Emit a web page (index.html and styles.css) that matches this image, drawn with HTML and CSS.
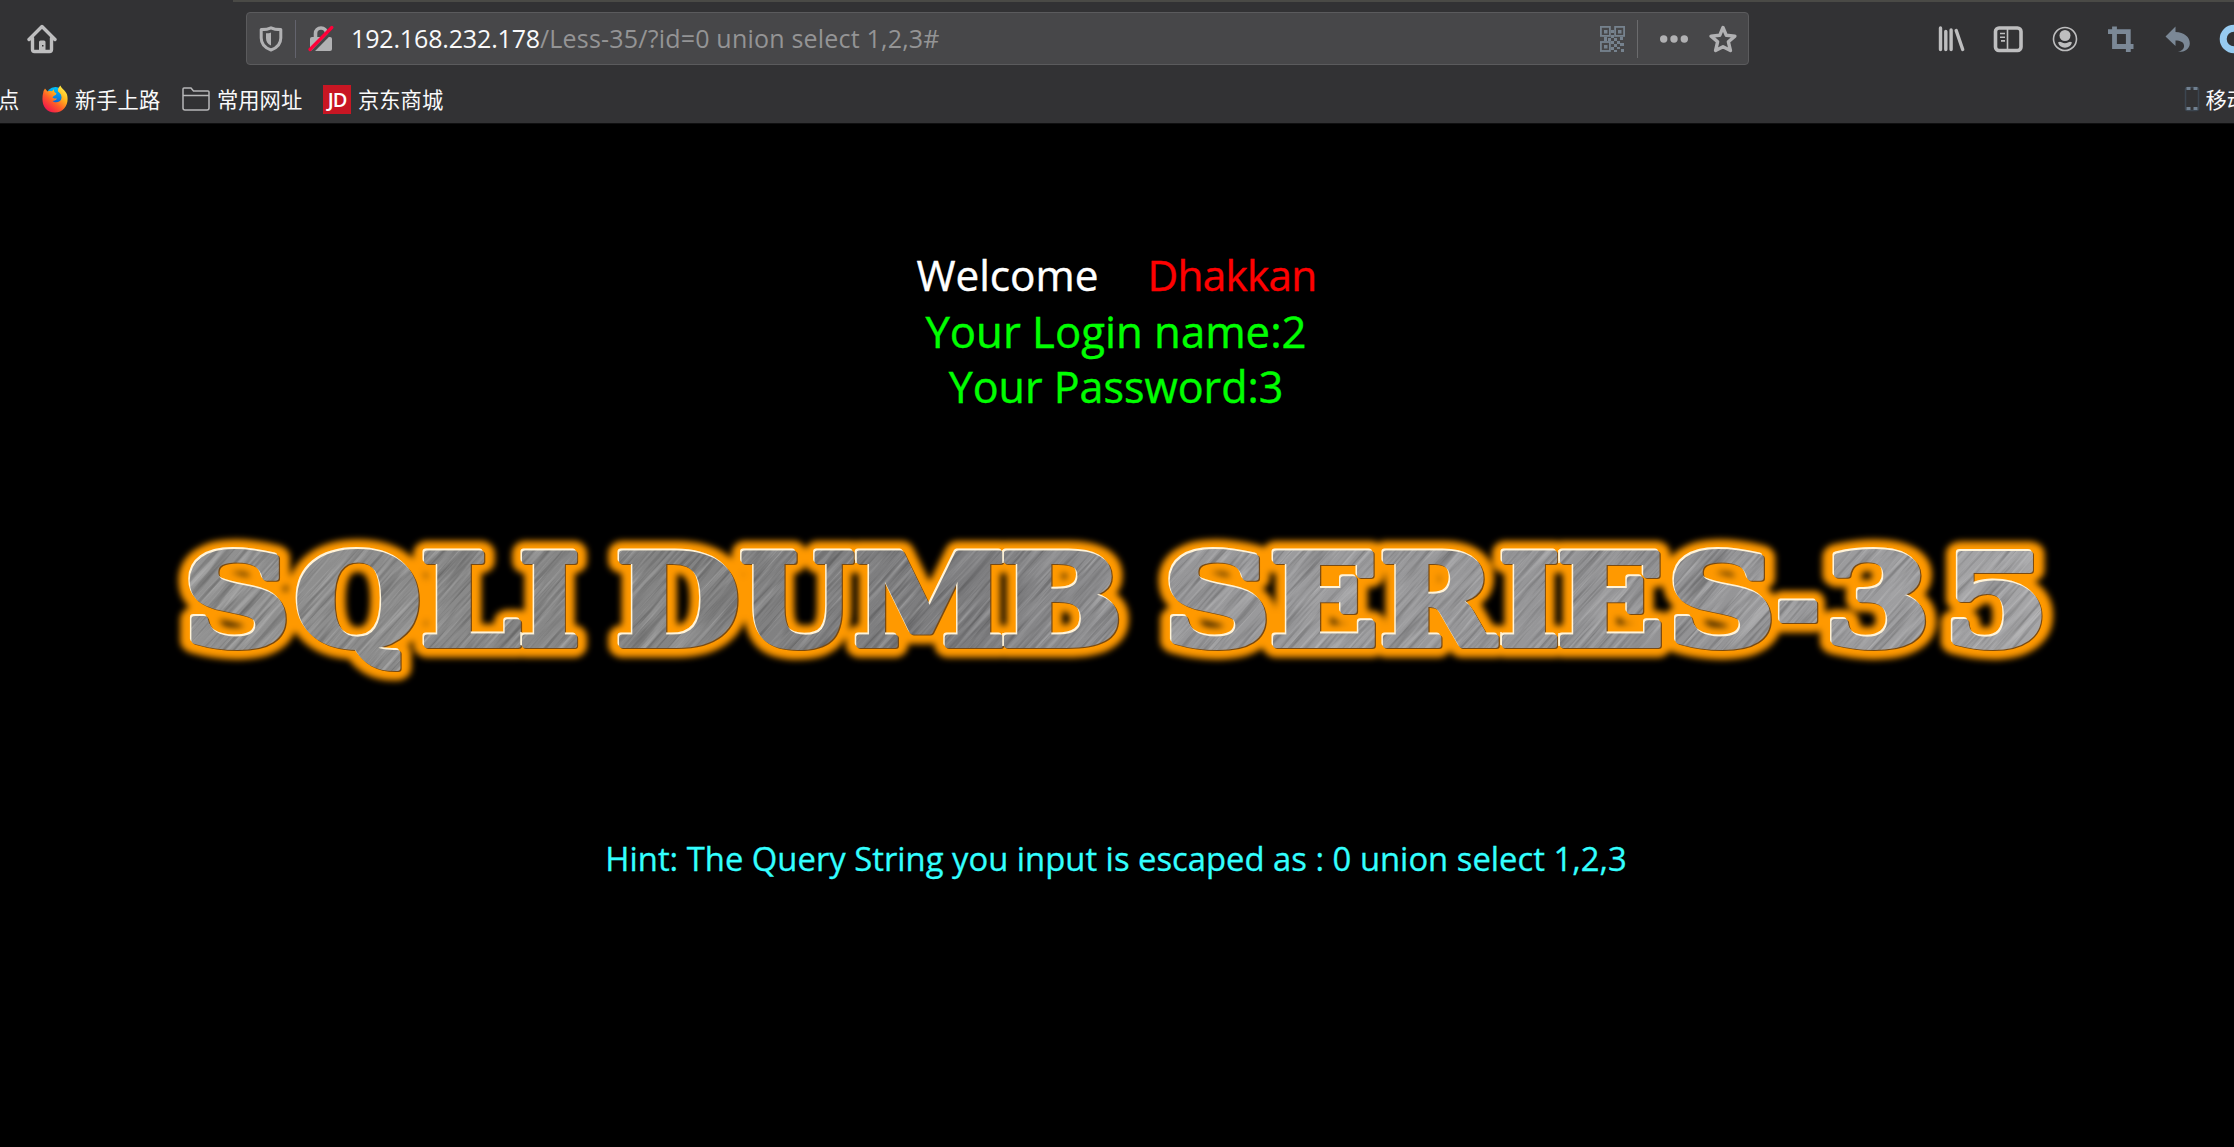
FILE: index.html
```
<!DOCTYPE html>
<html lang="zh-CN">
<head>
<meta charset="utf-8">
<title>Less-35</title>
<link rel="stylesheet" href="styles.css">
</head>
<body>
<header class="chrome">
  <div class="nav">
    <svg class="icon home" viewBox="0 0 30 30"><path d="M2 15.5 15 2.500l13 13M5.500 14v11.500q0 2 2 2h15q2 0 2-2V14" fill="none" stroke="#bebebf" stroke-width="3.400" stroke-linecap="round" stroke-linejoin="round"/><path d="M12 27v-9q0-1.500 1.500-1.500h3.500q1.500 0 1.500 1.500v9z" fill="#bebebf"/><rect x="15" y="21" width="1.500" height="1.500" fill="#323234"/></svg>
    <div class="urlbar">
      <svg class="shield" viewBox="0 0 24 26"><path d="M12 1.800C9 3.300 5.500 3.500 2.200 3.500V12c0 6 4 10 9.800 12 5.800-2 9.800-6 9.800-12V3.500C18.500 3.500 15 3.300 12 1.800z" fill="none" stroke="#b1b1b3" stroke-width="3" stroke-linejoin="round"/><path d="M12 6.500v13C8.500 18 7 15.500 7 12V7.300C9 7.300 10.500 7.200 12 6.500z" fill="#b1b1b3"/></svg>
      <span class="divider"></span>
      <svg class="lock" viewBox="0 0 26 28"><path d="M7.500 14V8.500a5.500 5.500 0 0 1 11 0V14" fill="none" stroke="#b1b1b3" stroke-width="3.600"/><rect x="2" y="12" width="22" height="14" rx="2" fill="#b1b1b3"/><path d="M4 27 25.500 5" stroke="#474749" stroke-width="3"/><path d="M2 24.500 23.800 2.500" stroke="#ff0039" stroke-width="3.200" stroke-linecap="round"/></svg>
      <span class="url"><span class="host">192.168.232.178</span><span class="path">/Less-35/?id=0 union select 1,2,3#</span></span>
      <svg class="qr" viewBox="0 0 25 26"><g fill="none" stroke="#76828e" stroke-width="1.800"><rect x=".9" y=".9" width="9" height="9"/><rect x="15.100" y=".9" width="9" height="9"/><rect x=".9" y="16" width="9" height="9"/></g><path fill="#76828e" d="M4 4h3.500v3.500H4zM18 4h3.500v3.500H18zM4 19h3.500v3.500H4zM11 4h3v3h-3zM4 11h3v4H4zM11 9h3v3h-3zM8 12h3v3H8zM14 12h3v3h-3zM20 11h3v3h-3zM11 15h3v3h-3zM17 15h3v3h-3zM14 18h3v3h-3zM20 17h4v3h-4zM11 21h3v3h-3zM17 21h3v2h-3zM14 24h3v2h-3zM21 23h3v3h-3z"/></svg>
      <span class="divider light"></span>
      <svg class="dots" viewBox="0 0 28 8"><g fill="#b1b1b3"><circle cx="3.700" cy="4" r="3.700"/><circle cx="14" cy="4" r="3.700"/><circle cx="24.300" cy="4" r="3.700"/></g></svg>
      <svg class="star" viewBox="0 0 28 28"><path d="m14 2.500 3.300 7.800 8.600.8-6.500 5.700 2 8.700L14 21.800l-7.400 3.700 2-8.700-6.500-5.700 8.600-.8z" fill="none" stroke="#b1b1b3" stroke-width="3.400" stroke-linejoin="round"/></svg>
    </div>
    <div class="tools">
      <svg class="icon" viewBox="0 0 30 30"><path d="M3.500 4v21.500M8.800 7.500v18M14.100 6v19.500M19.200 6.500l6.500 19" stroke="#bebebf" stroke-width="3.400" stroke-linecap="round"/></svg>
      <svg class="icon" viewBox="0 0 30 30"><rect x="2.500" y="4" width="25.500" height="22.500" rx="3.500" fill="none" stroke="#bebebf" stroke-width="3.600"/><path d="M14.500 5v20" stroke="#bebebf" stroke-width="1.600"/><path d="M7 9.500h5M7 13.200h5M8 16.900h4" stroke="#bebebf" stroke-width="1.600"/></svg>
      <svg class="icon" viewBox="0 0 30 30"><circle cx="15" cy="15" r="11.500" fill="none" stroke="#bebebf" stroke-width="1.600"/><circle cx="15" cy="11.500" r="5.500" fill="#bebebf"/><path d="M8 18.500q2-1.500 3.500-.2 3.500 1.800 7 0 1.500-1.300 3.500.2-1.500 5-7 5.200-5.500-.2-7-5.200z" fill="#bebebf"/></svg>
      <svg class="icon" viewBox="0 0 30 30"><path d="M8.500 2.500v20h19M2 7.700h20.300V28" fill="none" stroke="#7b8896" stroke-width="4.800"/></svg>
      <svg class="icon" viewBox="0 0 30 30"><path d="M2.500 12.500 12.500 2.500v5.500c8.500.2 14.500 5 14.300 11.500-.2 5.500-5 8.700-11.800 8.500 4.500-1.500 6.500-4 6-6.800-.6-3.200-3.700-4.700-8.500-4.700v5.500z" fill="#7b8896"/></svg>
      <svg class="icon" viewBox="0 0 30 30"><circle cx="15" cy="15" r="10.800" fill="none" stroke="#97cbf0" stroke-width="7"/></svg>
    </div>
  </div>
  <div class="bookmarks">
    <span class="bm cut">点</span>
    <span class="bm fx"><svg viewBox="0 0 26 28"><defs><linearGradient id="fox" x1=".9" y1=".05" x2=".2" y2=".95"><stop offset="0" stop-color="#fff44f"/><stop offset=".35" stop-color="#ffb41c"/><stop offset=".65" stop-color="#ff5b28"/><stop offset="1" stop-color="#f0144e"/></linearGradient><linearGradient id="globe" x1="0" y1="0" x2="0" y2="1"><stop offset="0" stop-color="#00c4fb"/><stop offset="1" stop-color="#0a4fce"/></linearGradient></defs><circle cx="13.500" cy="11.500" r="9.500" fill="url(#globe)"/><path d="M1.500 6 3 3.500l2.500 3C7 6 8.500 6 10 6.200L12 4c-.5 2 .5 3.500 2.500 4.500-.5 2-3 2-4 4 1 1 2.500 1 4.500 1-1 2-3.500 2.200-4.500 2.500 2.500 2.500 8.500 1.500 9-3 .3-4-2-5-3.500-6.500C15.500 4 17 2 18.500.5c.5 2.500 5 5 6.500 9C27.500 19 22 27.500 13 27.500S0 20.500.5 13c0-3 .7-4.500 1-7z" fill="url(#fox)"/></svg>新手上路</span>
    <span class="bm folder"><svg viewBox="0 0 28 24"><path d="M1 21V2q0-1 1-1h7l2.500 3H26q1 0 1 1v16q0 2-2 2H3q-2 0-2-2zM1 8.500h26" fill="none" stroke="#b7b7b8" stroke-width="1.500"/></svg>常用网址</span>
    <span class="bm jd"><b>JD</b>京东商城</span>
    <span class="bm mobile"><svg viewBox="0 0 16 26"><rect x="1.500" y="1.500" width="13" height="23" rx="2" fill="none" stroke="#3c4650" stroke-width="1.500"/><path d="M2.500 2.500h4M9.500 2.500h4M2.500 22.500h4M9.500 22.500h4" stroke="#708090" stroke-width="3"/></svg>移动</span>
  </div>
</header>
<main class="page">
  <div class="welcome">
    <div class="line hello"><span class="w">Welcome</span><span class="d">Dhakkan</span></div>
    <div class="line login">Your Login name:2</div>
    <div class="line pass">Your Password:3</div>
  </div>
  <svg class="banner" viewBox="0 520 2234 180">
    <defs>
      <text id="title" y="644.5"><tspan x="183.6" textLength="107.5" lengthAdjust="spacingAndGlyphs">S</tspan><tspan x="294.6" textLength="126.9" lengthAdjust="spacingAndGlyphs">Q</tspan><tspan x="420.7" textLength="99.8" lengthAdjust="spacingAndGlyphs">L</tspan><tspan x="518.9" textLength="61" lengthAdjust="spacingAndGlyphs">I</tspan> <tspan x="615.7" textLength="124.2" lengthAdjust="spacingAndGlyphs">D</tspan><tspan x="740.2" textLength="113.3" lengthAdjust="spacingAndGlyphs">U</tspan><tspan x="853.8" textLength="152.4" lengthAdjust="spacingAndGlyphs">M</tspan><tspan x="1000.6" textLength="122" lengthAdjust="spacingAndGlyphs">B</tspan> <tspan x="1163.6" textLength="107.5" lengthAdjust="spacingAndGlyphs">S</tspan><tspan x="1269.7" textLength="108.9" lengthAdjust="spacingAndGlyphs">E</tspan><tspan x="1379.8" textLength="114.7" lengthAdjust="spacingAndGlyphs">R</tspan><tspan x="1498.9" textLength="61" lengthAdjust="spacingAndGlyphs">I</tspan><tspan x="1556.7" textLength="107.9" lengthAdjust="spacingAndGlyphs">E</tspan><tspan x="1667.6" textLength="108.6" lengthAdjust="spacingAndGlyphs">S</tspan><tspan x="1776.2" textLength="44" lengthAdjust="spacingAndGlyphs">-</tspan><tspan x="1824.5" textLength="106.5" lengthAdjust="spacingAndGlyphs">3</tspan><tspan x="1943.4" textLength="105.9" lengthAdjust="spacingAndGlyphs">5</tspan></text>
      <linearGradient id="steel" gradientUnits="userSpaceOnUse" x1="189" y1="0" x2="2043" y2="0"><stop offset="0" stop-color="#929292"/><stop offset=".25" stop-color="#848484"/><stop offset=".42" stop-color="#7c7c7e"/><stop offset=".5" stop-color="#929294"/><stop offset=".6" stop-color="#9c9c9e"/><stop offset=".8" stop-color="#929294"/><stop offset="1" stop-color="#a6a6a8"/></linearGradient>
      <filter id="glow" filterUnits="userSpaceOnUse" x="150" y="520" width="1930" height="180"><feGaussianBlur stdDeviation="3.200"/></filter>
      <filter id="brush" x="0" y="0" width="1" height="1"><feTurbulence type="fractalNoise" baseFrequency="0.012 0.28" numOctaves="3" seed="4"/><feColorMatrix values="0 0 0 0 1  0 0 0 0 1  0 0 0 0 1  2.200 0 0 0 -1"/></filter>
      <filter id="grain" x="0" y="0" width="1" height="1"><feTurbulence type="fractalNoise" baseFrequency="0.012 0.28" numOctaves="3" seed="9"/><feColorMatrix values="0 0 0 0 0  0 0 0 0 0  0 0 0 0 0  2.200 0 0 0 -1"/></filter>
      <mask id="letters" maskUnits="userSpaceOnUse" x="150" y="520" width="1930" height="180"><use href="#title" class="solid"/></mask>
    </defs>
    <use href="#title" class="halo" filter="url(#glow)"/>
    <use href="#title" class="shade" x="1.200" y="1.200"/>
    <use href="#title" class="light" x="-1.500" y="-1.500"/>
    <g mask="url(#letters)">
      <rect x="150" y="520" width="1930" height="180" fill="url(#steel)"/>
      <g transform="rotate(-48 1117 610)" opacity=".27">
        <rect x="300" y="-250" width="1640" height="1720" filter="url(#brush)"/>
        <rect x="300" y="-250" width="1640" height="1720" filter="url(#grain)"/>
      </g>
    </g>
    <path d="M521 632v13M856 550v13M1003 550v13M1003 633v13M1501 632v13M1559 550v13M1559 633v13" class="seam"/>
  </svg>
  <div class="hint">Hint: The Query String you input is escaped as : 0 union select 1,2,3</div>
</main>
</body>
</html>
```
FILE: styles.css
```
* { box-sizing: border-box; }
body { margin: 0; width: 2234px; height: 1147px; overflow: hidden; background: #000; font-family: "Open Sans", "Noto Sans CJK SC", sans-serif; }
svg { display: block; flex: none; }
.chrome { height: 124px; background: linear-gradient(90deg, transparent 233px, #4a4a46 233px) top / 100% 2px no-repeat, #323234; border-bottom: 1px solid #0f0f10; overflow: hidden; }
.nav { display: flex; align-items: center; height: 77px; padding-left: 27px; }
.icon { width: 30px; height: 30px; }
.urlbar { display: flex; align-items: center; width: 1503px; height: 53px; margin-left: 189px; padding-left: 12px; background: #474749; border: 1px solid #5b5b5d; border-radius: 4px; flex: none; }
.shield { width: 24px; height: 26px; }
.divider { width: 1px; height: 38px; margin-left: 12px; background: #63636d; }
.divider.light { background: #6b6b6d; }
.lock { width: 26px; height: 28px; margin-left: 12px; }
.url { display: flex; width: 1230px; margin: -2px 0 0 17px; font-size: 25px; line-height: 40px; white-space: pre; }
.host { color: #f9f9fa; letter-spacing: -.15px; }
.path { color: #949495; letter-spacing: .2px; }
.url, .star, .dots, .qr { flex: none; }
.qr { width: 25px; height: 26px; margin-left: 19px; }
.dots { width: 28px; height: 8px; margin-left: 22px; }
.star { width: 28px; height: 28px; margin-left: 21px; }
.tools { display: flex; gap: 26.4px; margin-left: 188px; flex: none; }
.bookmarks { display: flex; align-items: center; height: 44px; font-family: "Noto Sans CJK SC", sans-serif; font-size: 21.3px; line-height: 30px; color: #f9f9fa; white-space: nowrap; }
.bm { display: flex; align-items: center; flex: none; }
.cut { margin-left: -2px; width: 44px; }
.fx { width: 140px; }
.fx svg { width: 26px; height: 28px; margin-right: 7px; }
.folder { width: 141px; }
.folder svg { width: 28px; height: 24px; margin-right: 7px; }
.jd b { width: 28px; height: 29px; margin-right: 7px; background: #c81623; color: #fff; font: 600 20px/29px "Open Sans", sans-serif; letter-spacing: -1px; text-align: center; }
.mobile { margin-left: auto; margin-right: -14px; }
.mobile svg { width: 16px; height: 26px; margin-right: 5px; }
.page { padding-top: 123px; text-align: center; }
.line { font-size: 43.7px; line-height: 56px; height: 56px; white-space: nowrap; -webkit-text-stroke: .4px; }
.hello { display: flex; justify-content: center; gap: 49px; font-size: 42.3px; padding-right: 1px; }
.w { color: #fff; }
.d { color: #f00; letter-spacing: -.7px; }
.login, .pass { color: #0f0; padding-right: 2px; }
.pass { font-size: 43px; }
.banner { width: 2234px; height: 180px; margin-top: 105px; font: bold 126px "DejaVu Serif", serif; stroke-linejoin: round; }
.halo { fill: #ff9900; stroke: #ff9900; stroke-width: 25px; }
.shade { fill: #7a4a10; stroke: #7a4a10; stroke-width: 6px; }
.light { fill: #fff3d8; stroke: #fff3d8; stroke-width: 6px; }
.solid { fill: #fff; stroke: #fff; stroke-width: 6px; }
.seam { fill: none; stroke: #fff3d8; stroke-width: 1.500px; }
.hint { margin-top: 135px; font-size: 32.800px; line-height: 48px; color: #33ffff; padding-right: 2px; -webkit-text-stroke: .3px; }
```
